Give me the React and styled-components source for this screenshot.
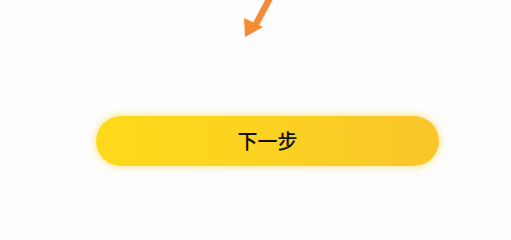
import styled, { createGlobalStyle } from "styled-components";

const GlobalStyle = createGlobalStyle`
  html, body {
    margin: 0;
    padding: 0;
    background: #fdfdfd;
  }
  body {
    font-family: "Noto Sans CJK SC", "Noto Sans", sans-serif;
  }
`;

const Page = styled.div`
  width: 511px;
  height: 225px;
  display: flex;
  flex-direction: column;
  align-items: center;
  background: #fdfdfd;
  overflow: hidden;
`;

const ArrowArea = styled.div`
  width: 511px;
  height: 116px;
  position: relative;
`;

const Arrow = styled.svg`
  position: absolute;
  left: 238px;
  top: -4px;
`;

const NextButton = styled.button`
  width: 343px;
  height: 50px;
  margin-left: 24px;
  border: none;
  border-radius: 25px;
  background: linear-gradient(90deg, #fdd91a 0%, #fcd320 45%, #fbc52b 100%);
  box-shadow: 0 0 6px 2px rgba(253, 214, 60, 0.45);
  color: #111;
  font-family: "Noto Sans CJK SC", "Noto Sans", sans-serif;
  font-size: 20px;
  font-weight: 500;
  letter-spacing: 0px;
  display: flex;
  align-items: center;
  justify-content: center;
  padding: 0 0 1px 0;
  cursor: pointer;
`;

export default function App() {
  return (
    <>
      <GlobalStyle />
      <Page>
        <ArrowArea>
          <Arrow width="40" height="46" viewBox="0 0 40 46">
            <line x1="33" y1="0" x2="17" y2="30" stroke="#f68b35" strokeWidth="6.5" />
            <polygon points="7,41 6,22 25,31" fill="#f68b35" />
          </Arrow>
        </ArrowArea>
        <NextButton>下一步</NextButton>
      </Page>
    </>
  );
}
